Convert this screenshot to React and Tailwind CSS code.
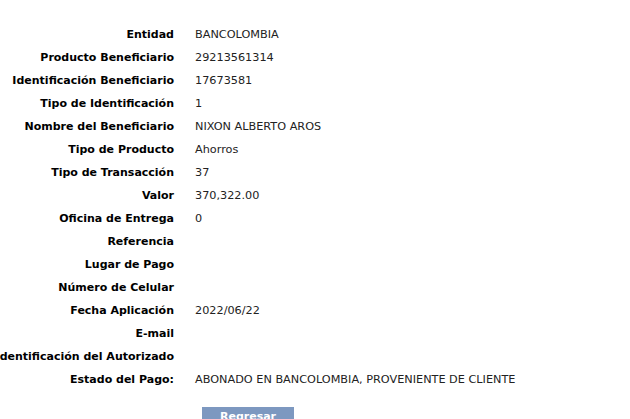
import React from "react";

const rows = [
  ["Entidad", "BANCOLOMBIA"],
  ["Producto Beneficiario", "29213561314"],
  ["Identificación Beneficiario", "17673581"],
  ["Tipo de Identificación", "1"],
  ["Nombre del Beneficiario", "NIXON ALBERTO AROS"],
  ["Tipo de Producto", "Ahorros"],
  ["Tipo de Transacción", "37"],
  ["Valor", "370,322.00"],
  ["Oficina de Entrega", "0"],
  ["Referencia", ""],
  ["Lugar de Pago", ""],
  ["Número de Celular", ""],
  ["Fecha Aplicación", "2022/06/22"],
  ["E-mail", ""],
  ["Identificación del Autorizado", ""],
  ["Estado del Pago:", "ABONADO EN BANCOLOMBIA, PROVENIENTE DE CLIENTE"],
];

export default function App() {
  return (
    <div className="w-[630px] h-[419px] overflow-hidden bg-white font-['DejaVu_Sans',sans-serif] text-[11px]">
      <div className="pt-[24px] flex flex-col">
        {rows.map(([label, value]) => (
          <div key={label} className="flex h-[23px] items-center">
            <div className="w-[174px] shrink-0 flex justify-end whitespace-nowrap font-bold text-black">
              {label}
            </div>
            <div className="pl-[21px] whitespace-nowrap text-[#222] text-[11.25px]">{value}</div>
          </div>
        ))}
      </div>
      <div className="pl-[202px] pt-[15px]">
        <button className="w-[92px] h-[20px] bg-[#7d98c0] text-white font-bold text-[11px] leading-[20px] text-center">
          Regresar
        </button>
      </div>
    </div>
  );
}
